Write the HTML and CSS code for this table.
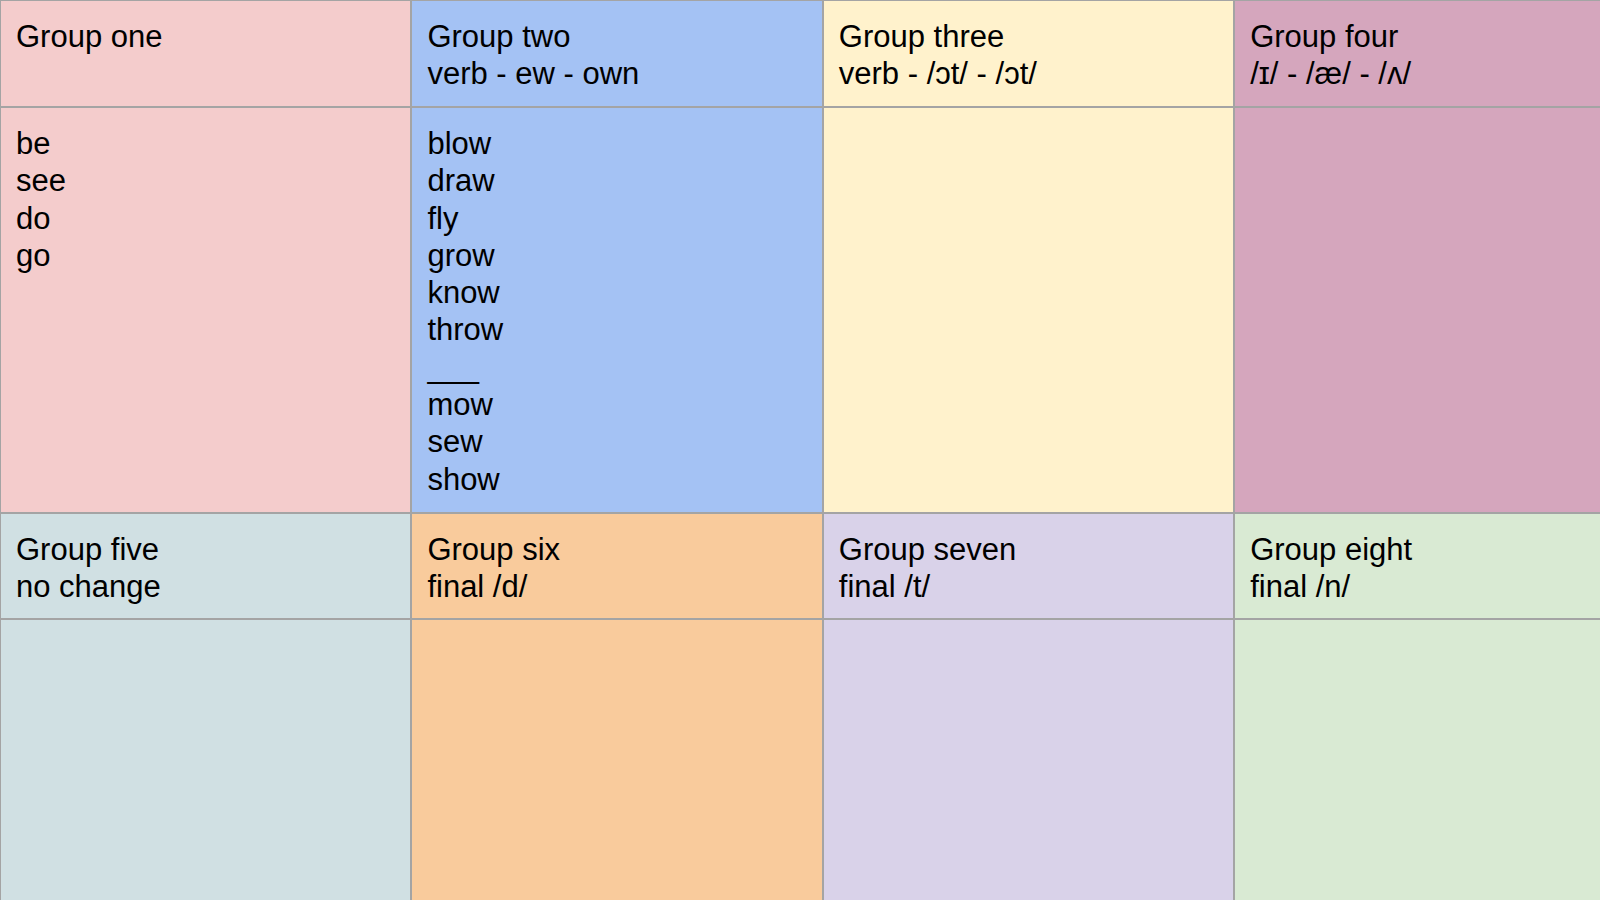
FILE: index.html
```html
<!DOCTYPE html>
<html lang="en">
<head>
<meta charset="utf-8">
<title>Verb groups</title>
<link rel="stylesheet" href="styles.css">
</head>
<body>
<div class="board">
  <div class="cell pink"><div>Group one</div></div>
  <div class="cell blue"><div>Group two</div><div>verb - ew - own</div></div>
  <div class="cell yellow"><div>Group three</div><div>verb - /ɔt/ - /ɔt/</div></div>
  <div class="cell mauve"><div>Group four</div><div>/ɪ/ - /æ/ - /ʌ/</div></div>

  <div class="cell pink"><div>be</div><div>see</div><div>do</div><div>go</div></div>
  <div class="cell blue"><div>blow</div><div>draw</div><div>fly</div><div>grow</div><div>know</div><div>throw</div><div>___</div><div>mow</div><div>sew</div><div>show</div></div>
  <div class="cell yellow"></div>
  <div class="cell mauve"></div>

  <div class="cell teal"><div>Group five</div><div>no change</div></div>
  <div class="cell orange"><div>Group six</div><div>final /d/</div></div>
  <div class="cell lilac"><div>Group seven</div><div>final /t/</div></div>
  <div class="cell green"><div>Group eight</div><div>final /n/</div></div>

  <div class="cell teal"></div>
  <div class="cell orange"></div>
  <div class="cell lilac"></div>
  <div class="cell green"></div>
</div>
</body>
</html>
```

FILE: styles.css
```css
html, body {
  margin: 0;
  padding: 0;
  overflow: hidden;
  background: #ffffff;
}

.board {
  display: grid;
  grid-template-columns: repeat(4, 409.4px);
  grid-template-rows: 105px 404px 104px 280px;
  gap: 2px;
  padding: 1px 0 0 1px;
  width: max-content;
  background: #a4a4a4;
  font-family: "Liberation Sans", Arial, sans-serif;
  font-size: 31px;
  line-height: 37.3px;
  color: #000000;
}

.cell {
  padding: 17px 14px 0 15px;
  white-space: nowrap;
  overflow: hidden;
}

.pink { background: #f4cccc; }
.blue { background: #a4c2f4; }
.yellow { background: #fff2cc; }
.mauve { background: #d5a6bd; }
.teal { background: #d0e0e3; }
.orange { background: #f9cb9c; }
.lilac { background: #d9d2e9; }
.green { background: #d9ead3; }
```
